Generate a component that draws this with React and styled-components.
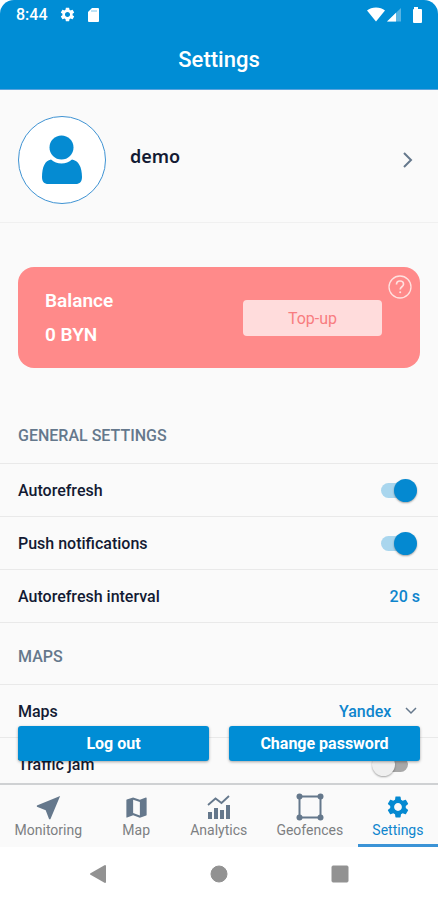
import React, { useState } from "react";
import styled, { createGlobalStyle } from "styled-components";
import { MdMap, MdNearMe, MdSettings } from "react-icons/md";

const tabs = [
  { label: "Monitoring", icon: <MdNearMe size={31} /> },
  { label: "Map", icon: <MdMap size={27} /> },
  { label: "Analytics", icon: <AnalyticsIcon /> },
  { label: "Geofences", icon: <GeofenceIcon /> },
  { label: "Settings", icon: <MdSettings size={26} /> }
];

const App = () => {
  const [refresh, setRefresh] = useState(true);
  const [push, setPush] = useState(true);
  const [traffic, setTraffic] = useState(false);

  return (
    <Screen>
      <GlobalStyle />
      <Header>
        <StatusBar>
          <StatusGroup $gap="11px">
            <Clock>8:44</Clock>
            <MdSettings size={17} />
            <SdCardIcon />
          </StatusGroup>
          <StatusGroup $gap="2px">
            <WifiIcon />
            <SignalIcon />
            <BatteryIcon />
          </StatusGroup>
        </StatusBar>
        <Title>Settings</Title>
      </Header>

      <Main>
        <Scroll>
          <Profile href="#profile">
            <Avatar>
              <UserIcon />
            </Avatar>
            <UserName>demo</UserName>
            <ChevronRight />
          </Profile>

          <BalanceCard>
            <div>
              <BalanceText>Balance</BalanceText>
              <BalanceText>0 BYN</BalanceText>
            </div>
            <TopUp>Top-up</TopUp>
            <Help aria-label="Help">
              <HelpIcon />
            </Help>
          </BalanceCard>

          <SectionTitle>GENERAL SETTINGS</SectionTitle>
          <Row>
            <label htmlFor="refresh">Autorefresh</label>
            <Switch
              id="refresh"
              checked={refresh}
              onChange={e => setRefresh(e.target.checked)}
            />
          </Row>
          <Row>
            <label htmlFor="push">Push notifications</label>
            <Switch
              id="push"
              checked={push}
              onChange={e => setPush(e.target.checked)}
            />
          </Row>
          <Row>
            <span>Autorefresh interval</span>
            <Value>20 s</Value>
          </Row>

          <SectionTitle>MAPS</SectionTitle>
          <Row>
            <label htmlFor="maps">Maps</label>
            <SelectWrap>
              <Select id="maps" defaultValue="Yandex">
                <option>Yandex</option>
              </Select>
              <ChevronDown />
            </SelectWrap>
          </Row>
          <Row>
            <label htmlFor="traffic">Traffic jam</label>
            <Switch
              id="traffic"
              checked={traffic}
              onChange={e => setTraffic(e.target.checked)}
            />
          </Row>
        </Scroll>
        <Actions>
          <ActionButton>Log out</ActionButton>
          <ActionButton>Change password</ActionButton>
        </Actions>
      </Main>

      <TabBar>
        {tabs.map(tab => (
          <Tab
            key={tab.label}
            href={`#${tab.label.toLowerCase()}`}
            $active={tab.label === "Settings"}
          >
            <TabIcon $active={tab.label === "Settings"}>{tab.icon}</TabIcon>
            {tab.label}
          </Tab>
        ))}
      </TabBar>

      <SystemNav>
        <NavButton aria-label="Back">
          <svg width="18" height="20" viewBox="0 0 18 20">
            <path d="M16 2v16L2 10z" strokeWidth="2" strokeLinejoin="round" />
          </svg>
        </NavButton>
        <NavButton aria-label="Home">
          <svg width="18" height="18" viewBox="0 0 18 18">
            <circle cx="9" cy="9" r="8" />
          </svg>
        </NavButton>
        <NavButton aria-label="Recent apps">
          <svg width="18" height="18" viewBox="0 0 18 18">
            <rect x="1" y="1" width="16" height="16" rx="1" />
          </svg>
        </NavButton>
      </SystemNav>
    </Screen>
  );
};

function SdCardIcon() {
  return (
    <svg width="13" height="16" viewBox="0 0 13 16" fill="#fff">
      <path d="M5 1h6a1 1 0 0 1 1 1v12a1 1 0 0 1-1 1H2a1 1 0 0 1-1-1V5z" />
      <path d="M5 3v2M7 3v2M9 3v2" stroke="#008dd5" strokeOpacity=".5" />
    </svg>
  );
}

function WifiIcon() {
  return (
    <svg width="18" height="15" viewBox="0 0 18 15" fill="#fff">
      <path d="M9 14.500L0 3.600C2.300 1.500 5.500.5 9 .5s6.700 1 9 3.100z" />
    </svg>
  );
}

function SignalIcon() {
  return (
    <svg width="15" height="15" viewBox="0 0 15 15" fill="#fff">
      <path d="M0 14.500L14 1v13.500z" opacity=".35" />
      <path d="M0 14.500L9 5.800v8.700z" />
    </svg>
  );
}

function BatteryIcon() {
  return (
    <svg width="22" height="16" viewBox="0 0 22 16" fill="#fff">
      <path d="M10 0h4v2h3a1 1 0 0 1 1 1v12a1 1 0 0 1-1 1h-7a1 1 0 0 1-1-1V3a1 1 0 0 1 1-1z" />
    </svg>
  );
}

function UserIcon() {
  return (
    <svg width="42" height="50" viewBox="0 0 42 50" fill="#058bd2">
      <circle cx="20.500" cy="12.500" r="12" />
      <path d="M10 24.500c3 2.600 6.500 4 10.500 4s7.500-1.400 10.500-4C37.500 25.500 41 32 41 42c0 4.500-2 7-6.500 7h-27C3 49 1 46.500 1 42c0-10 3-16.500 9-17.500z" />
    </svg>
  );
}

function HelpIcon() {
  return (
    <svg width="24" height="24" viewBox="0 0 24 24" fill="none" stroke="#ffe1df">
      <circle cx="12" cy="12" r="11" strokeWidth="1.300" />
      <path
        d="M8.500 9.500C8.500 7.300 9.900 6 12 6s3.500 1.200 3.500 3.200c0 2.500-3.300 2.600-3.300 5.300"
        strokeWidth="1.700"
      />
      <circle cx="12.200" cy="17.200" r="1" fill="#ffe1df" stroke="none" />
    </svg>
  );
}

function ChevronRight() {
  return (
    <svg width="10" height="16" viewBox="0 0 10 16" fill="none" stroke="#65788c">
      <path d="M1 1l7 7-7 7" strokeWidth="2" />
    </svg>
  );
}

function AnalyticsIcon() {
  return (
    <svg width="24" height="26" viewBox="0 0 24 26" fill="#65788c">
      <path d="M1 18h4v7H1zM7 14h4v11H7zM13 16h4v9h-4zM19 11h4v14h-4z" />
      <path
        d="M1 11l7.500-6.500 6 4.500L22 2"
        fill="none"
        stroke="#65788c"
        strokeWidth="1.800"
      />
    </svg>
  );
}

function GeofenceIcon() {
  return (
    <svg width="28" height="28" viewBox="0 0 28 28" fill="#65788c">
      <path
        d="M3.500 3.500h21v21h-21z"
        fill="none"
        stroke="#65788c"
        strokeWidth="2"
      />
      <circle cx="3.500" cy="3.500" r="3" />
      <circle cx="24.500" cy="3.500" r="3" />
      <circle cx="3.500" cy="24.500" r="3" />
      <circle cx="24.500" cy="24.500" r="3" />
    </svg>
  );
}

const ChevronDown = () => (
  <SelectArrow width="12" height="8" viewBox="0 0 12 8" fill="none">
    <path d="M1 1l5 5 5-5" stroke="#65788c" strokeWidth="1.500" />
  </SelectArrow>
);

const GlobalStyle = createGlobalStyle`
  * {
    box-sizing: border-box;
  }
  body {
    margin: 0;
    background: #fff;
    font-family: Roboto, sans-serif;
  }
  button, select {
    font-family: inherit;
    border: 0;
    cursor: pointer;
  }
  svg {
    display: block;
    flex-shrink: 0;
  }
`;

const Screen = styled.div`
  display: flex;
  flex-direction: column;
  height: 100vh;
`;

const Header = styled.header`
  color: #fff;
  background: #008dd5;
  border-radius: 14px 14px 0 0;
  border-bottom: 1px solid #5ba3dd;
`;

const StatusBar = styled.div`
  display: flex;
  justify-content: space-between;
  align-items: center;
  height: 29px;
  padding: 0 12px 0 16px;
`;

const StatusGroup = styled.div`
  display: flex;
  align-items: center;
  gap: ${props => props.$gap};
`;

const Clock = styled.span`
  font-size: 16px;
  font-weight: 500;
`;

const Title = styled.h1`
  margin: 0;
  padding-top: 2px;
  font-size: 22px;
  font-weight: 500;
  line-height: 58px;
  text-align: center;
`;

const Main = styled.main`
  position: relative;
  flex: 1;
  min-height: 0;
  background: #fafafa;
`;

const Scroll = styled.div`
  height: 100%;
  overflow-y: auto;
  scrollbar-width: none;
`;

const Profile = styled.a`
  display: flex;
  align-items: center;
  padding: 26px 25px 18px 18px;
  color: #131a33;
  text-decoration: none;
  border-bottom: 1px solid #f0f0f0;
`;

const Avatar = styled.div`
  display: flex;
  justify-content: center;
  align-items: center;
  width: 88px;
  height: 88px;
  border: 1px solid #3f93d3;
  border-radius: 50%;
  background: #fff;
`;

const UserName = styled.span`
  flex: 1;
  padding: 0 0 8px 24px;
  font-family: "Noto Sans", sans-serif;
  font-size: 18px;
  font-weight: 600;
`;

const BalanceCard = styled.section`
  position: relative;
  display: flex;
  justify-content: space-between;
  align-items: center;
  margin: 44px 18px 34px;
  padding: 17px 38px 16px 27px;
  color: #fff;
  border-radius: 16px;
  background: #ff8a8a;
`;

const BalanceText = styled.div`
  font-size: 19px;
  font-weight: 600;
  line-height: 34px;
`;

const TopUp = styled.button`
  width: 139px;
  height: 36px;
  color: #f87c80;
  font-size: 16px;
  border-radius: 4px;
  background: #ffdcdc;
`;

const Help = styled.button`
  position: absolute;
  top: 8px;
  right: 8px;
  padding: 0;
  background: none;
`;

const SectionTitle = styled.h2`
  margin: 0;
  padding: 16px 18px 9px;
  color: #65788c;
  font-size: 16px;
  font-weight: 500;
  line-height: 36px;
`;

const Row = styled.div`
  display: flex;
  justify-content: space-between;
  align-items: center;
  height: 53px;
  padding: 0 18px;
  color: #131a33;
  font-size: 16px;
  font-weight: 500;
  border-top: 1px solid #e9e9e9;

  & + ${SectionTitle} {
    border-top: 1px solid #e9e9e9;
  }
`;

const Value = styled.span`
  color: #0e85cd;
`;

const Switch = styled.input.attrs({ type: "checkbox", role: "switch" })`
  appearance: none;
  position: relative;
  width: 45px;
  height: 23px;
  margin: 0 3px 0 0;
  cursor: pointer;

  &::before {
    content: "";
    position: absolute;
    inset: 4px 9px;
    border-radius: 8px;
    background: ${props => (props.checked ? "#a9d6ee" : "#a8a8a8")};
  }

  &::after {
    content: "";
    position: absolute;
    top: 0;
    left: ${props => (props.checked ? "22px" : "0")};
    width: 23px;
    height: 23px;
    border-radius: 50%;
    background: ${props => (props.checked ? "#0489d1" : "#efefef")};
    box-shadow: 0 1px 2px rgba(0, 0, 0, 0.35);
  }
`;

const SelectWrap = styled.div`
  position: relative;
`;

const Select = styled.select`
  appearance: none;
  padding: 4px 28px 4px 0;
  color: #0e85cd;
  font-size: 16px;
  font-weight: 500;
  background: none;
`;

const SelectArrow = styled.svg`
  position: absolute;
  top: 9px;
  right: 3px;
  pointer-events: none;
`;

const Actions = styled.div`
  position: absolute;
  right: 18px;
  bottom: 22px;
  left: 18px;
  display: grid;
  grid-template-columns: 1fr 1fr;
  gap: 20px;
`;

const ActionButton = styled.button`
  height: 35px;
  padding: 0;
  color: #fff;
  font-size: 16px;
  font-weight: 700;
  border-radius: 3px;
  background: #008dd5;
  box-shadow: 0 1px 3px rgba(0, 0, 0, 0.35);
`;

const TabBar = styled.nav`
  display: flex;
  border-top: 2px solid #cfd1d3;
  background: #fafafa;
`;

const Tab = styled.a`
  display: flex;
  flex: 1 1 auto;
  flex-direction: column;
  align-items: center;
  min-width: 79px;
  height: 62px;
  padding: 8px 11px 0;
  color: ${props => (props.$active ? "#0e85cd" : "#7d7f82")};
  font-size: 14px;
  line-height: 18px;
  text-decoration: none;
  border-bottom: 3px solid
    ${props => (props.$active ? "#3b93d6" : "transparent")};
`;

const TabIcon = styled.span`
  display: flex;
  justify-content: center;
  align-items: center;
  height: 28px;
  color: ${props => (props.$active ? "#0489d1" : "#65788c")};
`;

const SystemNav = styled.div`
  display: flex;
  justify-content: center;
  align-items: center;
  gap: 103px;
  height: 53px;
  background: #fff;
`;

const NavButton = styled.button`
  padding: 0;
  color: #929292;
  background: none;

  svg {
    fill: currentColor;
    stroke: currentColor;
  }
`;

export default App;
